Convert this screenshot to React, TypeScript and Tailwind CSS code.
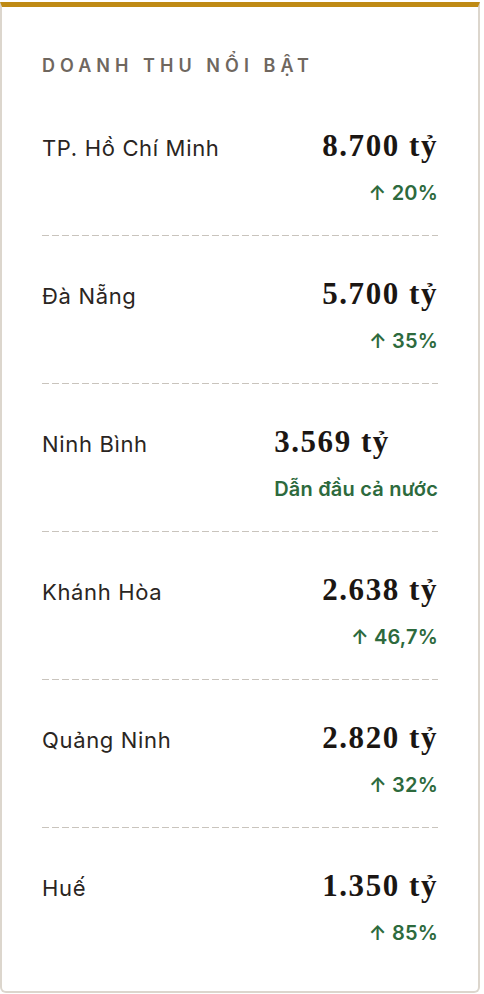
const regions = [
  { name: "TP. Hồ Chí Minh", value: "8.700 tỷ", note: "↑ 20%" },
  { name: "Đà Nẵng", value: "5.700 tỷ", note: "↑ 35%" },
  { name: "Ninh Bình", value: "3.569 tỷ", note: "Dẫn đầu cả nước" },
  { name: "Khánh Hòa", value: "2.638 tỷ", note: "↑ 46,7%" },
  { name: "Quảng Ninh", value: "2.820 tỷ", note: "↑ 32%" },
  { name: "Huế", value: "1.350 tỷ", note: "↑ 85%" },
];

export default function App() {
  return (
    <div className="min-h-screen bg-white pt-[2px]" style={{ fontFamily: "Inter, 'Noto Sans', sans-serif" }}>
      <div className="w-[480px] h-[991px] bg-white border-x-2 border-b-2 border-t-[5px] border-x-[#dcd6cd] border-b-[#dcd6cd] border-t-[#bf8a14] rounded-b-md px-10 pt-[47px]">
        {/* Card heading */}
        <h2 className="text-[18px] leading-6 font-semibold uppercase tracking-[0.28em] text-[#6f675f] mb-[10px]">
          Doanh thu nổi bật
        </h2>

        <div>
          {regions.map((r, i) => (
            <div key={r.name}>
              {i > 0 && (
                <div className="h-px bg-[repeating-linear-gradient(to_right,#c9c4bd_0_7px,transparent_7px_10px)]"></div>
              )}
              <div className="flex items-baseline justify-between pt-[38px] pb-[30px]">
                <span className="text-[22px] leading-7 tracking-[0.03em] text-[#2a2522]">{r.name}</span>
                <div>
                  <div
                    className="text-[31px] leading-10 font-bold text-[#1b1613] tracking-[0.05em]"
                    style={{ fontFamily: "'Liberation Serif', serif" }}
                  >
                    {r.value}
                  </div>
                  <div className="mt-[15px] text-right text-[20px] leading-6 font-semibold tracking-[0.01em] text-[#2d6a3d]">
                    {r.note}
                  </div>
                </div>
              </div>
            </div>
          ))}
        </div>
      </div>
    </div>
  );
}
